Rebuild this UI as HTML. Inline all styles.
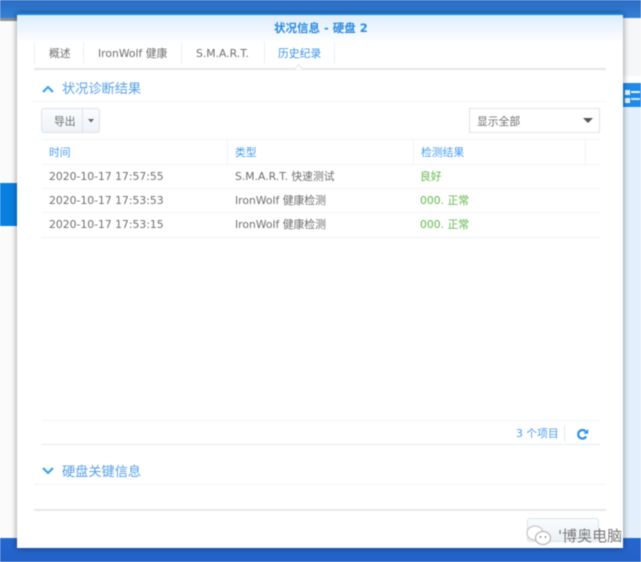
<!DOCTYPE html>
<html><head><meta charset="utf-8">
<style>
html,body{margin:0;padding:0;background:#fff}
#p{position:relative;width:641px;height:562px;overflow:hidden;background:#e3f0fb;font-family:"DejaVu Sans","Noto Sans CJK SC",sans-serif;font-size:10.8px;color:#6e6e6e;filter:blur(.45px)}
#p div,#p svg{position:absolute}
.t{white-space:nowrap;line-height:14px}
.h{color:#4a9df0}
.g{color:#62b84a}
.l{height:1px;background:#f1f4f7}
.v{width:1px;background:#e8eff6}
</style></head><body>
<div id="p">
<div style="left:0;top:0;width:641px;height:18px;background:linear-gradient(#2a6cc4,#3581d6)"></div>
<div style="left:0;top:18px;width:17px;height:3px;background:#8d8f93"></div>
<div style="left:0;top:21px;width:17px;height:162px;background:#fbfbfc"></div>
<div style="left:0;top:183px;width:17px;height:43px;background:#087fdf"></div>
<div style="left:0;top:226px;width:17px;height:312px;background:#fbfbfc"></div>
<div style="left:623px;top:18px;width:18px;height:58px;background:#f6f7f8"></div>
<div style="left:623px;top:76px;width:18px;height:7px;background:#fff"></div>
<div style="left:623px;top:83px;width:18px;height:24px;background:#1f8ae6"></div>
<div style="left:625px;top:90px;width:5px;height:5px;background:#e8f3fc"></div>
<div style="left:625px;top:98px;width:5px;height:5px;background:#e8f3fc"></div>
<div style="left:631px;top:91px;width:9px;height:2px;background:#e8f3fc"></div>
<div style="left:631px;top:98px;width:9px;height:2px;background:#cfe5f8"></div>
<div style="left:0;top:538px;width:641px;height:24px;background:linear-gradient(#2566cf,#2361c8)"></div>
<div style="left:17px;top:13px;width:606px;height:535px;background:#fff;box-shadow:0 0 6px rgba(0,0,0,.45)"></div>
<div style="left:17px;top:13px;width:606px;height:2px;background:#0b86e8"></div>
<div style="left:17px;top:15px;width:606px;height:28px;background:linear-gradient(#dcedfb,#fff)"></div>

<div class="t" style="left:274px;top:21px;font-size:11.5px;font-weight:bold;color:#2b8ae0">状况信息 - 硬盘 2</div>

<div class="v" style="left:34px;top:42px;height:21px"></div>
<div class="v" style="left:83px;top:42px;height:21px"></div>
<div class="v" style="left:181px;top:42px;height:21px"></div>
<div class="v" style="left:264px;top:42px;height:21px"></div>
<div class="v" style="left:334px;top:42px;height:21px"></div>
<div class="t" style="left:49px;top:47px">概述</div>
<div class="t" style="left:98px;top:47px">IronWolf 健康</div>
<div class="t" style="left:196px;top:47px">S.M.A.R.T.</div>
<div class="t h" style="left:278px;top:47px;color:#3a93e6">历史纪录</div>
<div style="left:34px;top:68px;width:572px;height:2px;background:#e4e6e8"></div>
<svg style="left:293px;top:63px" width="11" height="7"><path d="M0 6.500H1.500L5.500 1.500L9.500 6.500H11" fill="#fff" stroke="#e0e2e4"/></svg>

<svg style="left:42px;top:85px" width="12" height="8"><path d="M1 7L6 2L11 7" fill="none" stroke="#2f9bf0" stroke-width="2"/></svg>
<div class="t" style="left:62px;top:83px;font-size:13.2px;color:#559fe8">状况诊断结果</div>
<div style="left:34px;top:101px;width:572px;border-top:1px dotted #e9ebee"></div>

<div style="left:41px;top:108px;width:57px;height:23px;border:1px solid #d9e3ec;border-radius:3px;background:linear-gradient(#fbfcfd,#eef3f8)"></div>
<div class="v" style="left:82px;top:109px;height:23px;background:#d9e3ec"></div>
<div class="t" style="left:54px;top:115px">导出</div>
<svg style="left:88px;top:119px" width="7" height="4"><path d="M0 0H6L3 3.500Z" fill="#666"/></svg>

<div style="left:469px;top:108px;width:129px;height:23px;border:1px solid #dbe3ea;background:#fff"></div>
<div class="t" style="left:477px;top:115px">显示全部</div>
<svg style="left:583px;top:118px" width="11" height="6"><path d="M0 0H10L5 5Z" fill="#555"/></svg>

<div class="l" style="left:41px;top:139px;width:559px"></div>
<div class="v" style="left:227px;top:140px;height:24px;background:#f0f4f8"></div>
<div class="v" style="left:413px;top:140px;height:24px;background:#f0f4f8"></div>
<div class="v" style="left:585px;top:140px;height:24px;background:#f0f4f8"></div>
<div class="l" style="left:41px;top:164px;width:559px"></div>
<div class="l" style="left:41px;top:188px;width:559px"></div>
<div class="l" style="left:41px;top:212px;width:559px"></div>
<div class="l" style="left:41px;top:237px;width:559px;background:#edf1f5"></div>

<div class="t h" style="left:49px;top:146px">时间</div>
<div class="t h" style="left:235px;top:146px">类型</div>
<div class="t h" style="left:421px;top:146px">检测结果</div>

<div class="t" style="left:49px;top:170px">2020-10-17 17:57:55</div>
<div class="t" style="left:235px;top:170px">S.M.A.R.T. 快速测试</div>
<div class="t g" style="left:420px;top:170px">良好</div>
<div class="t" style="left:49px;top:194px">2020-10-17 17:53:53</div>
<div class="t" style="left:235px;top:194px">IronWolf 健康检测</div>
<div class="t g" style="left:420px;top:194px">000. 正常</div>
<div class="t" style="left:49px;top:218px">2020-10-17 17:53:15</div>
<div class="t" style="left:235px;top:218px">IronWolf 健康检测</div>
<div class="t g" style="left:420px;top:218px">000. 正常</div>

<div class="l" style="left:41px;top:420px;width:559px;background:#f3f4f6"></div>
<div class="l" style="left:41px;top:444px;width:559px;background:#e3edf6"></div>
<div class="t h" style="left:516px;top:427px">3 个项目</div>
<div class="v" style="left:564px;top:425px;height:17px;background:#dfe9f2"></div>
<svg style="left:576px;top:428px" width="13" height="13" viewBox="0 0 13 13"><path d="M10.200 8.500A4.300 4.300 0 1 1 9.700 3.400" fill="none" stroke="#2b90ea" stroke-width="2.200"/><path d="M7.500 5.800H12.200V1Z" fill="#2b90ea"/></svg>

<svg style="left:42px;top:467px" width="12" height="8"><path d="M1 1L6 6L11 1" fill="none" stroke="#2f9bf0" stroke-width="2"/></svg>
<div class="t" style="left:62px;top:466px;font-size:13.2px;color:#559fe8">硬盘关键信息</div>
<div style="left:34px;top:484px;width:572px;border-top:1px dotted #e9ebee"></div>
<div style="left:34px;top:509px;width:572px;height:2px;background:#e6e8ea"></div>

<div style="left:527px;top:518px;width:70px;height:22px;border:1px solid #d9e3ec;border-radius:3px;background:linear-gradient(#fafcfd,#eaf1f7)"></div>
<svg style="left:526px;top:524px" width="28" height="22" viewBox="0 0 28 22"><ellipse cx="9" cy="9" rx="8" ry="7" fill="#fff" stroke="#bdbdbd"/><ellipse cx="17" cy="14" rx="7.500" ry="6.500" fill="#fff" stroke="#a8a8a8"/><circle cx="14.500" cy="13" r="1" fill="#999"/><circle cx="19.500" cy="13" r="1" fill="#999"/></svg>
<div class="t" style="left:558px;top:528px;font-size:15px;line-height:16px;color:#777;text-shadow:0 0 2px #fff">'博奥电脑</div>
</div>
</body></html>
